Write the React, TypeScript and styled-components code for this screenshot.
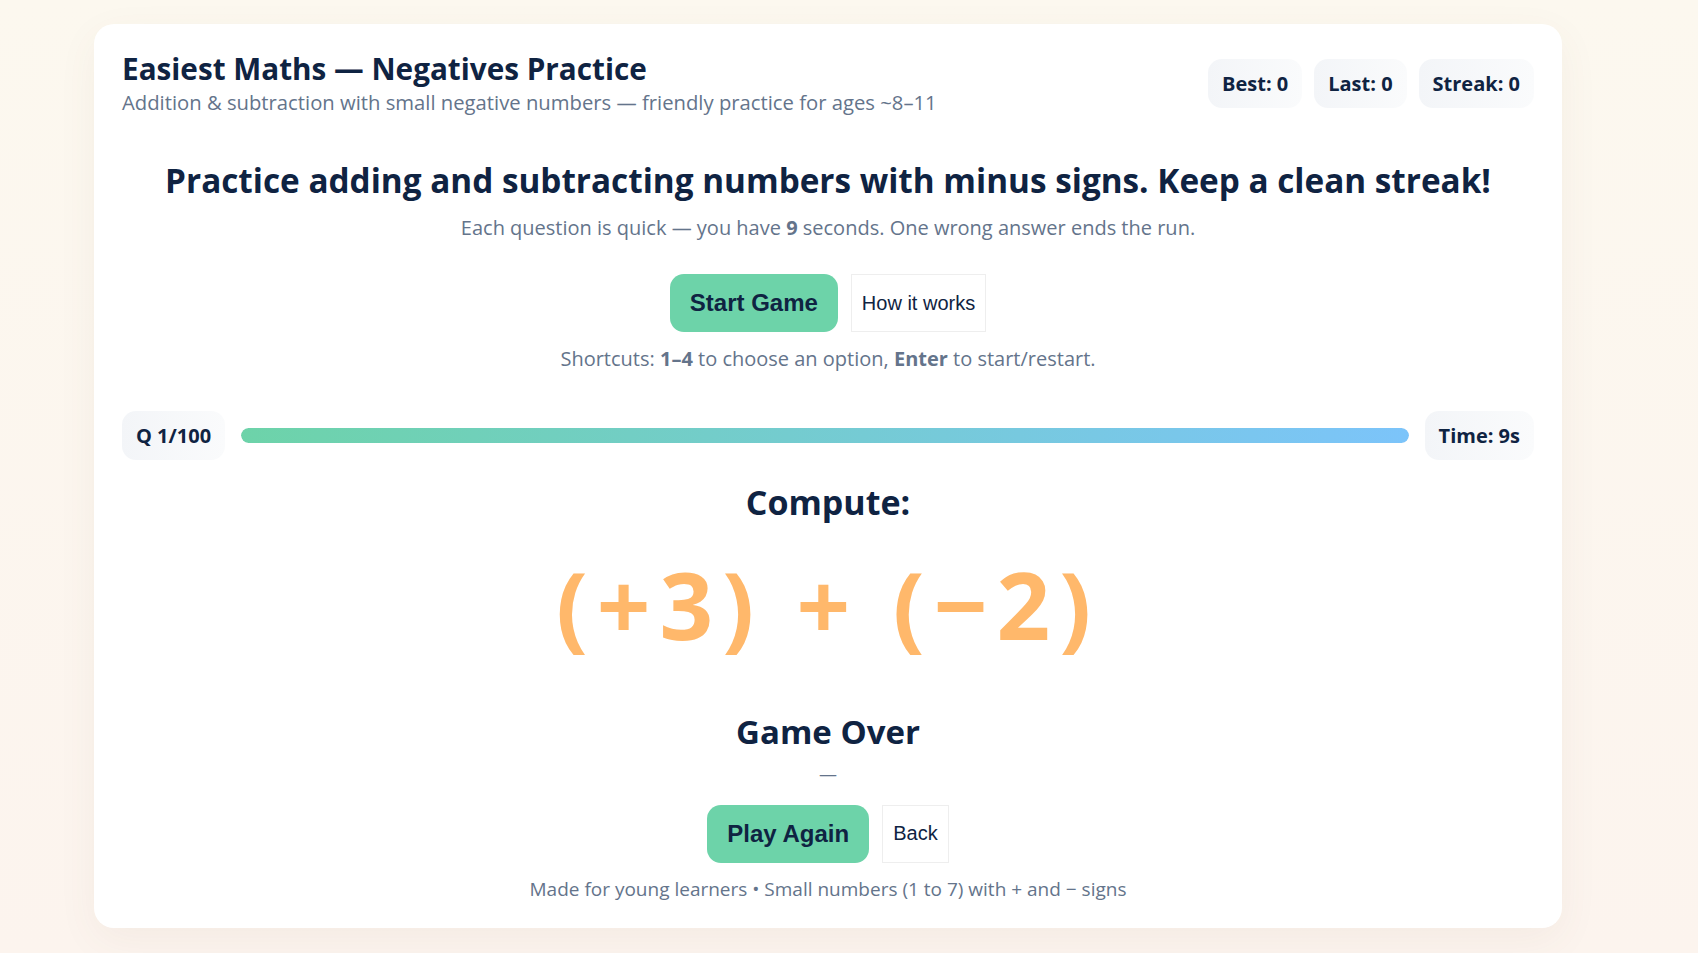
import * as React from 'react';
import styled, { createGlobalStyle } from 'styled-components';

const Global = createGlobalStyle`
    html, body {
        margin: 0;
        padding: 0;
    }
    body {
        min-height: 953px;
        background: linear-gradient(180deg, #fcf8ef 0%, #fcf4ee 100%);
        font-family: "Open Sans", "Noto Sans", sans-serif;
        color: #0f2342;
    }
`;

const Page = styled.div`
    padding: 24px 136px 25px 94px;
`;

const Card = styled.main`
    background: #fff;
    border-radius: 20px;
    box-shadow: 0 12px 40px rgba(120, 90, 60, 0.06);
    padding: 28px;
    display: flex;
    flex-direction: column;
    align-items: center;
`;

const Header = styled.header`
    width: 100%;
    display: flex;
    align-items: center;
    justify-content: space-between;
`;

const TitleBlock = styled.div`
    display: flex;
    flex-direction: column;
    gap: 4px;
`;

const Title = styled.h1`
    margin: 0;
    font-size: 29.7px;
    line-height: 34px;
    font-weight: 700;
`;

const Subtitle = styled.p`
    margin: 0;
    font-size: 20.25px;
    line-height: 24px;
    color: #64748b;
`;

const Stats = styled.div`
    display: flex;
    gap: 12px;
`;

const Pill = styled.div`
    height: 49px;
    box-sizing: border-box;
    padding: 0 14px;
    display: flex;
    align-items: center;
    border-radius: 14px;
    background: linear-gradient(90deg, #f3f5f8, #fafbfc);
    font-size: 20px;
    font-weight: 700;
    white-space: nowrap;
`;

const Headline = styled.h2`
    margin: 46px 0 0;
    font-size: 33.3px;
    line-height: 40px;
    font-weight: 700;
    text-align: center;
`;

const Note = styled.p<{ $top: number }>`
    margin: ${p => p.$top}px 0 0;
    font-size: 20px;
    line-height: 24px;
    color: #64748b;
    text-align: center;
    b {
        font-weight: 700;
    }
`;

const Actions = styled.div<{ $top: number }>`
    margin-top: ${p => p.$top}px;
    display: flex;
    gap: 13px;
    height: 58px;
`;

const Primary = styled.button`
    border: none;
    border-radius: 14px;
    background: #6dd3a9;
    color: #0f2342;
    font-family: "Liberation Sans", Arial, sans-serif;
    font-weight: 700;
    font-size: 24px;
    padding: 0 20px;
`;

const Plain = styled.button`
    border: 1px solid #eeeeee;
    background: #fff;
    color: #0f2342;
    font-family: "Liberation Sans", Arial, sans-serif;
    font-size: 20px;
    padding: 0 10px;
`;

const Progress = styled.div`
    width: 100%;
    margin-top: 40px;
    display: flex;
    align-items: center;
    gap: 16px;
`;

const Track = styled.div`
    flex: 1;
    height: 15px;
    border-radius: 8px;
    background: #eef1f5;
    overflow: hidden;
`;

const Fill = styled.div`
    height: 100%;
    border-radius: 8px;
    background: linear-gradient(90deg, #6dd3a9, #7cc4fa);
`;

const Compute = styled.h3`
    margin: 22px 0 0;
    font-size: 34px;
    line-height: 40px;
    font-weight: 700;
`;

const Expression = styled.div`
    margin-top: 26px;
    font-size: 94px;
    line-height: 1.2;
    font-weight: 700;
    color: #ffb86b;
    letter-spacing: 9px;
    white-space: pre;
`;

const Over = styled.h3`
    margin: 52px 0 0;
    font-size: 33px;
    line-height: 38px;
    font-weight: 700;
`;

const Dash = styled.div`
    margin-top: 11px;
    font-size: 18px;
    line-height: 24px;
    color: #64748b;
`;

const Footer = styled.p`
    margin: 15px 0 0;
    font-size: 19px;
    line-height: 22px;
    color: #64748b;
`;

export default function App() {
    const timeLeft = 9;
    const total = 9;
    return (
        <Page>
            <Global />
            <Card>
                <Header>
                    <TitleBlock>
                        <Title>Easiest Maths — Negatives Practice</Title>
                        <Subtitle>Addition &amp; subtraction with small negative numbers — friendly practice for ages ~8–11</Subtitle>
                    </TitleBlock>
                    <Stats>
                        <Pill>Best: 0</Pill>
                        <Pill>Last: 0</Pill>
                        <Pill>Streak: 0</Pill>
                    </Stats>
                </Header>

                <Headline>Practice adding and subtracting numbers with minus signs. Keep a clean streak!</Headline>
                <Note $top={16}>Each question is quick — you have <b>9</b> seconds. One wrong answer ends the run.</Note>

                <Actions $top={34}>
                    <Primary>Start Game</Primary>
                    <Plain>How it works</Plain>
                </Actions>
                <Note $top={15}>Shortcuts: <b>1–4</b> to choose an option, <b>Enter</b> to start/restart.</Note>

                <Progress>
                    <Pill>Q 1/100</Pill>
                    <Track>
                        <Fill style={{ width: `${(timeLeft / total) * 100}%` }} />
                    </Track>
                    <Pill>Time: {timeLeft}s</Pill>
                </Progress>

                <Compute>Compute:</Compute>
                <Expression>(+3) + (−2)</Expression>

                <Over>Game Over</Over>
                <Dash>—</Dash>
                <Actions $top={19}>
                    <Primary>Play Again</Primary>
                    <Plain>Back</Plain>
                </Actions>
                <Footer>Made for young learners • Small numbers (1 to 7) with + and − signs</Footer>
            </Card>
        </Page>
    );
}
